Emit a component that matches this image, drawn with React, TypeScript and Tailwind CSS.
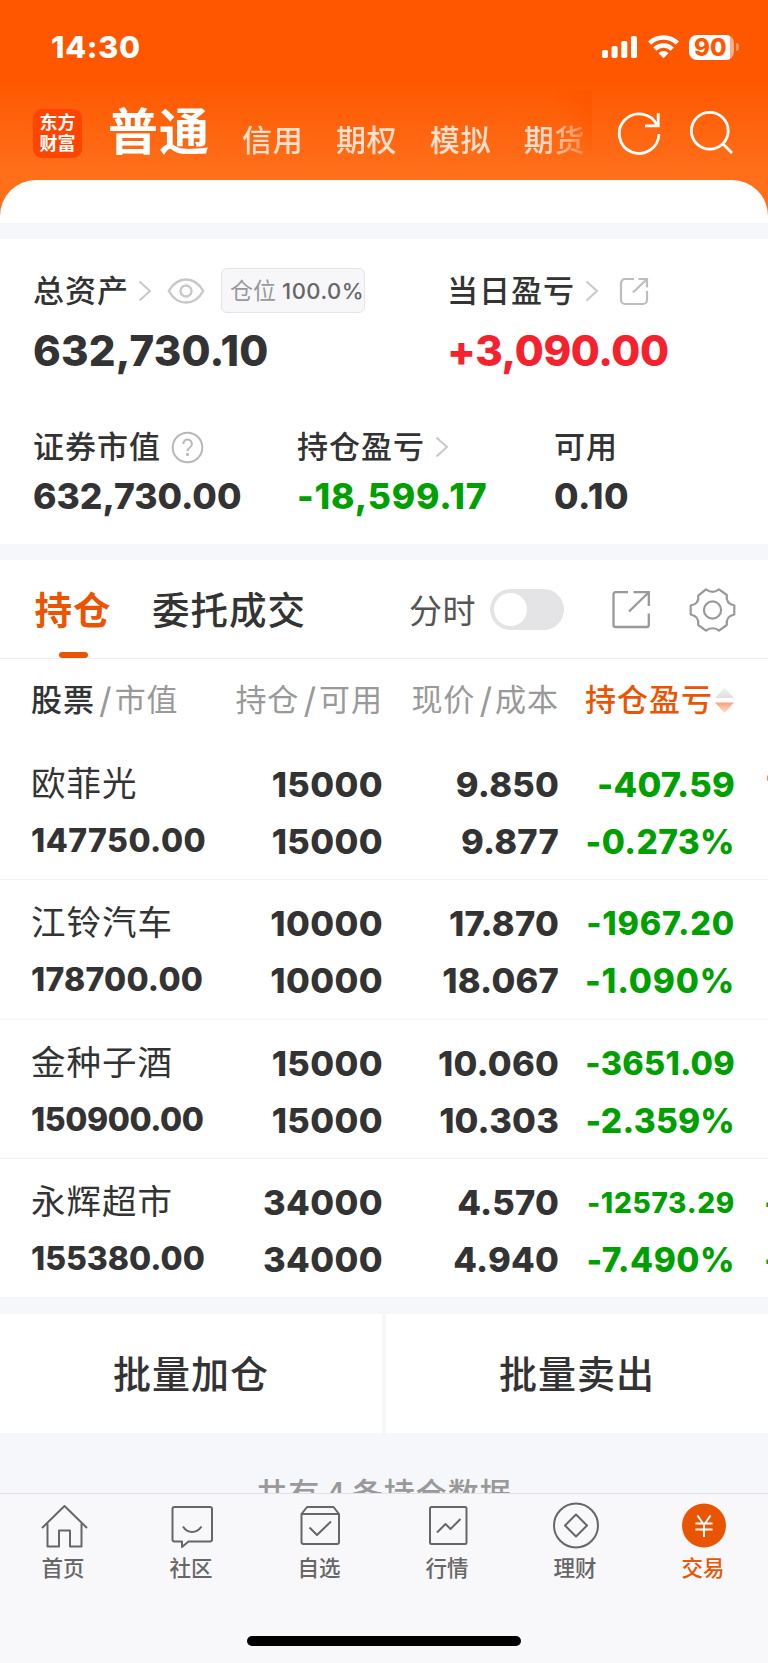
import type { ReactNode } from "react";

type Holding = {
  name: string;
  value: string;
  valueClass: string;
  amount: string;
  available: string;
  price: string;
  cost: string;
  profit: string;
  profitClass: string;
  rate: string;
  rateClass: string;
  next?: string;
  nextClass?: string;
  nextRate?: string;
};

const holdings: Holding[] = [
  {
    name: "欧菲光",
    value: "147750.00",
    valueClass: "tracking-[0.5px]",
    amount: "15000",
    available: "15000",
    price: "9.850",
    cost: "9.877",
    profit: "-407.59",
    profitClass: "text-[34.5px] tracking-[0.2px]",
    rate: "-0.273%",
    rateClass: "tracking-[0.4px]",
    next: "1",
    nextClass: "pl-[2px] text-[#f5222d]",
  },
  {
    name: "江铃汽车",
    value: "178700.00",
    valueClass: "tracking-[0.25px]",
    amount: "10000",
    available: "10000",
    price: "17.870",
    cost: "18.067",
    profit: "-1967.20",
    profitClass: "text-[32.5px] tracking-[0.8px]",
    rate: "-1.090%",
    rateClass: "tracking-[0.8px]",
  },
  {
    name: "金种子酒",
    value: "150900.00",
    valueClass: "tracking-[-0.4px]",
    amount: "15000",
    available: "15000",
    price: "10.060",
    cost: "10.303",
    profit: "-3651.09",
    profitClass: "text-[32.5px] tracking-[0.2px]",
    rate: "-2.359%",
    rateClass: "tracking-[0.2px]",
    next: "1",
    nextClass: "pl-[3px] text-[#f5222d]",
  },
  {
    name: "永辉超市",
    value: "155380.00",
    valueClass: "",
    amount: "34000",
    available: "34000",
    price: "4.570",
    cost: "4.940",
    profit: "-12573.29",
    profitClass: "text-[28px] tracking-[0.7px]",
    rate: "-7.490%",
    rateClass: "tracking-[0.5px]",
    next: "-",
    nextClass: "text-[#00a000]",
    nextRate: "-",
  },
];

function StatusBar() {
  return (
    <div className="flex h-[94px] items-center justify-between pr-[29px] pl-[51px]">
      <span className="text-[30.5px] leading-none font-extrabold tracking-[0.7px]">
        14:30
      </span>
      <div className="flex items-center gap-[10px]">
        <svg width="36" height="24" viewBox="0 0 36 24" fill="white">
          <rect x="0" y="15" width="6" height="8" rx="1.8" />
          <rect x="9.6" y="11" width="6" height="12" rx="1.8" />
          <rect x="19.3" y="6" width="6" height="17" rx="1.8" />
          <rect x="29" y="1" width="6" height="22" rx="1.8" />
        </svg>
        <svg width="31" height="24" viewBox="0 0 31 24" fill="none" stroke="white" strokeWidth="4.6">
          <path d="M1.6 8.2a19.8 19.8 0 0 1 27.8 0" />
          <path d="M6.8 14.2a12.2 12.2 0 0 1 17.4 0" />
          <path d="M15.5 23.3l-5-5.1a7 7 0 0 1 10 0z" fill="white" stroke="none" />
        </svg>
        <div className="flex items-center gap-[2px]">
          <div className="h-[25px] w-[45px] rounded-[8px] bg-[linear-gradient(90deg,#fff_40.5px,#ffae85_40.5px)] pl-[5px] text-[24px] leading-[25px] font-extrabold text-[#ff5700]">
            90
          </div>
          <div className="h-[8px] w-[3px] rounded-r-full bg-[#ff9a66]" />
        </div>
      </div>
    </div>
  );
}

function Header() {
  return (
    <header className="h-[223px] bg-[linear-gradient(180deg,#ff5700_0px,#ff5700_78px,#ff6f1a_172px)] text-white">
      <StatusBar />
      <div className="flex h-[86px] pl-[33px]">
        <div className="mt-[15px] flex h-[49px] w-[49px] flex-col items-center justify-center rounded-[9px] bg-[#ff4400] text-[18px] leading-[20.5px] font-bold">
          <span>东方</span>
          <span>财富</span>
        </div>
        <h1 className="mt-[13px] ml-[26px] text-[50px] leading-[50px] font-bold tracking-[1px]">
          普通
        </h1>
        <div className="relative ml-[31px] w-[351px] pt-[30px]">
          <span className="absolute -top-[4px] right-0 h-[60px] w-[36px] bg-[linear-gradient(to_bottom_left,#ff5500,#ff600b00_65%)]" />
          <nav className="relative flex gap-[32.5px] [mask-image:linear-gradient(90deg,#000_300px,transparent_362px)] pl-px text-[30px] leading-[32px] font-medium tracking-[0.7px] whitespace-nowrap text-[#ffe0cf]">
            <span>信用</span>
            <span>期权</span>
            <span>模拟</span>
            <span>期货</span>
          </nav>
        </div>
        <svg className="mt-[15px] ml-[25px] shrink-0" width="46" height="48" viewBox="0 0 46 48" fill="none" stroke="white" strokeWidth="2.8">
          <path d="M41.900 25A19.800 19.800 0 1 1 40 16.200" />
          <path d="M41.200 4.200v12.600H28" />
        </svg>
        <svg className="mt-[15px] ml-[26px] shrink-0" width="46" height="48" viewBox="0 0 46 48" fill="none" stroke="white" strokeWidth="2.8">
          <circle cx="20.8" cy="21.8" r="18.4" />
          <path d="M33.6 34.6l9.4 9.4" />
        </svg>
      </div>
      <div className="h-[43px] rounded-t-[36px] bg-white" />
    </header>
  );
}

function Chevron() {
  return (
    <svg width="14" height="22" viewBox="0 0 14 22" fill="none" stroke="#c8c8c8" strokeWidth="2">
      <path d="M1.5 1.5L12 11l-10.5 9.5" />
    </svg>
  );
}

function Label({ children }: { children: ReactNode }) {
  return (
    <span className="text-[31px] leading-[36px] font-medium tracking-[1px] whitespace-nowrap">
      {children}
    </span>
  );
}

function Assets() {
  return (
    <section className="mt-[16px] h-[305px] bg-white pl-[33px] text-[#333]">
      <div className="flex pt-[29px]">
        <div className="w-[414px]">
          <div className="flex h-[45px] items-center">
            <Label>总资产</Label>
            <span className="ml-[9px]">
              <Chevron />
            </span>
            <svg className="ml-[15px]" width="38" height="28" viewBox="0 0 38 28" fill="none" stroke="#c8c8c8" strokeWidth="2.4">
              <path d="M1.8 14C6 6.5 12 2.5 19 2.5S32 6.5 36.2 14C32 21.5 26 25.5 19 25.5S6 21.5 1.8 14z" />
              <circle cx="19" cy="14" r="5.5" />
            </svg>
            <div className="ml-[16px] flex h-[45px] w-[144px] items-center rounded-[6px] border-[1.5px] border-[#e4e4e7] bg-[#f7f7fa] pt-px pl-[8px] text-[23px] leading-none whitespace-nowrap text-[#999]">
              仓位
              <span className="ml-[6px] text-[22px] font-medium tracking-[0.5px] text-[#666]">
                100.0%
              </span>
            </div>
          </div>
          <p className="mt-[13px] text-[42px] leading-[50px] font-extrabold tracking-[0.2px]">
            632,730.10
          </p>
        </div>
        <div>
          <div className="flex h-[45px] items-center">
            <Label>当日盈亏</Label>
            <span className="ml-[10px]">
              <Chevron />
            </span>
            <svg className="ml-[20px]" width="30" height="30" viewBox="0 0 30 30" fill="none" stroke="#bdbdbd" strokeWidth="2.2">
              <path d="M15 3H6a4 4 0 0 0-4 4v17a4 4 0 0 0 4 4h18a4 4 0 0 0 4-4v-9" />
              <path d="M19.5 3H28v8.500M28 3L14 16.500" />
            </svg>
          </div>
          <p className="mt-[13px] text-[42px] leading-[50px] font-extrabold tracking-[-0.4px] text-[#f5222d]">
            +3,090.00
          </p>
        </div>
      </div>
      <div className="flex pt-[53px]">
        <div className="w-[264px]">
          <div className="flex h-[36px] items-center">
            <Label>证券市值</Label>
            <svg className="ml-[10px]" width="33" height="33" viewBox="0 0 33 33" fill="none" stroke="#b8b8b8" strokeWidth="2">
              <circle cx="16.5" cy="16.5" r="14.8" />
              <path d="M12.3 13a4.300 4.300 0 1 1 6.600 3.500c-1.600 1-2.400 1.700-2.400 3.700" />
              <path d="M16.5 22v3" strokeWidth="2.6" />
            </svg>
          </div>
          <p className="mt-[11px] text-[35.5px] leading-[42px] font-extrabold">
            632,730.00
          </p>
        </div>
        <div className="w-[257px]">
          <div className="flex h-[36px] items-center">
            <Label>持仓盈亏</Label>
            <span className="ml-[10px]">
              <Chevron />
            </span>
          </div>
          <p className="mt-[11px] text-[35.5px] leading-[42px] font-extrabold tracking-[0.8px] text-[#00a000]">
            -18,599.17
          </p>
        </div>
        <div>
          <div className="flex h-[36px] items-center">
            <Label>可用</Label>
          </div>
          <p className="mt-[11px] text-[35.5px] leading-[42px] font-extrabold tracking-[0.5px]">
            0.10
          </p>
        </div>
      </div>
    </section>
  );
}

function Tabs() {
  return (
    <div className="flex h-[99px] border-b-[1.5px] border-[#f0f0f2] pl-[35px] whitespace-nowrap">
      <div className="flex w-[76px] flex-col items-center text-[#ea5504]">
        <span className="mt-[28px] h-[46px] text-[37.5px] leading-[46px] font-bold tracking-[1px]">
          持仓
        </span>
        <span className="mt-[18px] h-[6px] w-[29px] rounded-[3px] bg-[#ea5504]" />
      </div>
      <span className="mt-[28px] ml-[41px] text-[37.5px] leading-[46px] font-medium tracking-[1px]">
        委托成交
      </span>
      <span className="mt-[28px] ml-auto text-[33px] leading-[46px] tracking-[0.5px] text-[#555]">
        分时
      </span>
      <span className="mt-[29px] ml-[14px] flex h-[41px] w-[74px] items-center rounded-full bg-[#e4e4e6] pl-[4px]">
        <span className="h-[33px] w-[33px] rounded-full bg-white" />
      </span>
      <svg className="mt-[29px] ml-[47px]" width="40" height="40" viewBox="0 0 40 40" fill="none" stroke="#999" strokeWidth="2.3">
        <path d="M17 3.2H4.5a2 2 0 0 0-2 2V36a2 2 0 0 0 2 2h31.3a2 2 0 0 0 2-2V24.5" />
        <path d="M22.5 3.2h15.3V17M37.8 3.2L18 22.5" />
      </svg>
      <svg className="mt-[27px] mr-[32px] ml-[38px]" width="47" height="46" viewBox="0 0 47 46" fill="none" stroke="#999" strokeWidth="2.2" strokeLinejoin="round">
        <path d="M9.2 8.7L17 2.3C20.5 5.600 26.500 5.600 30 2.300L37.800 8C37 13.500 39.500 17.300 45.300 18.500V27.500C39.500 28.700 37 32.500 37.800 38L30 43.700C26.500 40.400 20.500 40.400 17 43.700L9.200 38C10 32.500 7.500 28.700 1.700 27.500V18.500C7.500 17.300 10 13.500 9.200 8.700z" />
        <circle cx="23.5" cy="23" r="8.6" />
      </svg>
    </div>
  );
}

function Slash() {
  return <span className="mr-[2px] ml-[4px] text-[35px]">/</span>;
}

function TableHead() {
  return (
    <div className="flex h-[82px] items-center pl-[31px] text-[31px] leading-[40px] tracking-[1px] whitespace-nowrap text-[#999]">
      <div className="flex w-[170px]">
        <span className="font-medium text-[#333]">股票</span>
        <Slash />
        <span>市值</span>
      </div>
      <div className="flex w-[182px] justify-end">
        持仓
        <Slash />
        可用
      </div>
      <div className="flex w-[176px] justify-end">
        现价
        <Slash />
        成本
      </div>
      <div className="flex w-[175px] items-center justify-end font-medium text-[#ea5504]">
        持仓盈亏
        <svg className="ml-[2px]" width="19" height="28" viewBox="0 0 19 28">
          <defs>
            <linearGradient id="sortUp" x1="0" y1="0" x2="0" y2="1">
              <stop offset="0" stopColor="#f3f3f3" />
              <stop offset="1" stopColor="#dedede" />
            </linearGradient>
            <linearGradient id="sortDown" x1="0" y1="0" x2="0" y2="1">
              <stop offset="0" stopColor="#f5a37a" />
              <stop offset="1" stopColor="#fbe0d2" />
            </linearGradient>
          </defs>
          <path d="M0 12L9.5 1.5L19 12z" fill="url(#sortUp)" />
          <path d="M0 16.5L9.5 27L19 16.5z" fill="url(#sortDown)" />
        </svg>
      </div>
    </div>
  );
}

function HoldingRow({ item }: { item: Holding }) {
  return (
    <div className="flex h-[139.25px] overflow-hidden border-b-[1.5px] border-[#f3f3f5] pl-[31px] text-[34.5px] font-extrabold whitespace-nowrap">
      <div className="w-[170px] shrink-0 pt-[20px]">
        <p className="text-[34.5px] leading-[46px] font-normal tracking-[1px]">
          {item.name}
        </p>
        <p className={`mt-[11px] text-[32px] leading-[46px] ${item.valueClass}`}>{item.value}</p>
      </div>
      <div className="w-[182px] shrink-0 pt-[21px] text-right tracking-[0.4px]">
        <p className="leading-[46px]">{item.amount}</p>
        <p className="mt-[11px] leading-[46px]">{item.available}</p>
      </div>
      <div className="w-[176px] shrink-0 pt-[21px] text-right tracking-[0.2px]">
        <p className="leading-[46px]">{item.price}</p>
        <p className="mt-[11px] leading-[46px]">{item.cost}</p>
      </div>
      <div className="w-[176px] shrink-0 pt-[21px] text-right text-[#00a000]">
        <p className={`leading-[46px] ${item.profitClass}`}>{item.profit}</p>
        <p className={`mt-[11px] text-[33.5px] leading-[46px] ${item.rateClass}`}>{item.rate}</p>
      </div>
      <div className={`ml-[29px] w-[30px] shrink-0 pt-[21px] ${item.nextClass ?? ""}`}>
        <p className="h-[46px] leading-[46px]">{item.next}</p>
        <p className="mt-[11px] leading-[46px]">{item.nextRate}</p>
      </div>
    </div>
  );
}

function NavItem({ label, active, children }: { label: string; active?: boolean; children: ReactNode }) {
  return (
    <div className={`flex w-[128px] flex-col items-center pt-[8px] ${active ? "text-[#ea5504]" : "text-[#666]"}`}>
      <svg width="48" height="48" viewBox="0 0 48 48" fill="none" stroke="currentColor" strokeWidth="2" strokeLinejoin="round">
        {children}
      </svg>
      <span className="mr-[2px] text-[21.5px] leading-[36px] font-medium">{label}</span>
    </div>
  );
}

function BottomNav() {
  return (
    <footer className="h-[170px] border-t-[1.5px] border-[#e2e2e5] bg-[#f8f8fb]">
      <div className="flex">
        <NavItem label="首页">
          <path d="M2 26L24.5 4L47 26" />
          <path d="M7.5 21.5V44.5H19V28.5H30V44.5H41.5V21.5" />
        </NavItem>
        <NavItem label="社区">
          <path d="M6.5 5H42a2 2 0 0 1 2 2V37.5a2 2 0 0 1-2 2H20.5L14 45V39.5H6.500a2 2 0 0 1-2-2V7a2 2 0 0 1 2-2z" />
          <path d="M15 24.5c4.500 7.300 13.500 7.300 18.500 0" />
        </NavItem>
        <NavItem label="自选">
          <path d="M5.5 12L11 5H37.5L43 12V40a2 2 0 0 1-2 2H7.5a2 2 0 0 1-2-2zM5.5 12H43" />
          <path d="M13.5 25.5L21 33L35 19.5" />
        </NavItem>
        <NavItem label="行情">
          <rect x="6" y="5" width="36.5" height="37" rx="1.5" />
          <path d="M13 30.5L21.5 22L26.5 27L36.5 17" />
        </NavItem>
        <NavItem label="理财">
          <circle cx="24" cy="23.5" r="22" />
          <path d="M24 12.5L35 23.5L24 34.5L13 23.5z" />
        </NavItem>
        <NavItem label="交易" active>
          <circle cx="24" cy="23.5" r="22" fill="#ea5504" stroke="none" />
          <path d="M17.5 13.5L24 23L30.5 13.5M24 23V35M15.5 21.5H32.5M15.5 27.5H32.5" stroke="white" />
        </NavItem>
      </div>
      <div className="mx-auto mt-[50px] h-[10px] w-[274px] rounded-full bg-black" />
    </footer>
  );
}

export default function App() {
  return (
    <div className="flex h-[1663px] w-[768px] flex-col overflow-hidden bg-[#f6f7fa] font-['Inter','Noto_Sans_CJK_SC',sans-serif] text-[#333]">
      <Header />
      <Assets />
      <section className="mt-[16px] bg-white">
        <Tabs />
        <TableHead />
        {holdings.map((item) => (
          <HoldingRow key={item.name} item={item} />
        ))}
      </section>
      <div className="mt-[16px] flex h-[119px] gap-[4px] text-[38px] leading-[121px] font-medium tracking-[1px]">
        <button className="flex-1 bg-white">批量加仓</button>
        <button className="flex-1 bg-white">批量卖出</button>
      </div>
      <div className="flex h-[60px] flex-none justify-center overflow-hidden pt-[43px] text-[31px] leading-[36px] font-medium tracking-[1px] text-[#999]">
        共有<span className="mx-[5px]">4</span>条持仓数据
      </div>
      <BottomNav />
    </div>
  );
}
